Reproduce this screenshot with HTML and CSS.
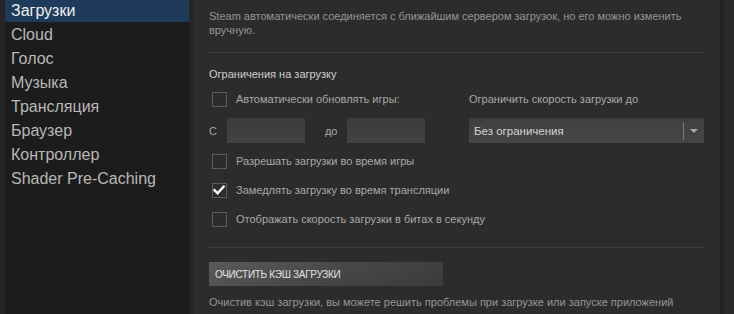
FILE: index.html
```html
<!DOCTYPE html>
<html lang="ru">
<head>
    <meta charset="UTF-8">
    <meta name="viewport" content="width=device-width, initial-scale=1.0">
    <title>Настройки — Загрузки</title>
    <link rel="stylesheet" href="styles.css">
</head>
<body class="settings-page">
    <ul class="side-menu">
        <li class="active">Загрузки</li>
        <li>Cloud</li>
        <li>Голос</li>
        <li>Музыка</li>
        <li>Трансляция</li>
        <li>Браузер</li>
        <li>Контроллер</li>
        <li>Shader Pre-Caching</li>
    </ul>

    <div class="panel">
        <p class="desc">Steam автоматически соединяется с ближайшим сервером загрузок, но его можно изменить вручную.</p>
        <div class="divider"></div>

        <h3 class="section-title">Ограничения на загрузку</h3>

        <div class="limits">
            <label class="check-row">
                <span class="box"></span>
                <span>Автоматически обновлять игры:</span>
            </label>
            <div class="limit-label">Ограничить скорость загрузки до</div>

            <div class="time-range">
                <span>С</span>
                <span class="field first"></span>
                <span class="to">до</span>
                <span class="field"></span>
            </div>
            <div class="dropdown">
                <span class="dropdown-value">Без ограничения</span>
                <span class="dropdown-arrow"></span>
            </div>
        </div>

        <label class="check-row spaced first-check">
            <span class="box"></span>
            <span>Разрешать загрузки во время игры</span>
        </label>
        <label class="check-row spaced">
            <span class="box checked">
                <svg viewBox="0 0 14 14" width="14" height="14"><path d="M2.5 7.2 L5.6 10.3 L11.6 3.6" fill="none" stroke="#fff" stroke-width="2.4" stroke-linecap="square"/></svg>
            </span>
            <span>Замедлять загрузку во время трансляции</span>
        </label>
        <label class="check-row spaced">
            <span class="box"></span>
            <span>Отображать скорость загрузки в битах в секунду</span>
        </label>

        <div class="divider lower"></div>

        <button class="clear-btn">Очистить кэш загрузки</button>
        <p class="note">Очистив кэш загрузки, вы можете решить проблемы при загрузке или запуске приложений</p>
    </div>

    <div class="scroll-strip"></div>
</body>
</html>
```

FILE: styles.css
```css
body.settings-page {
    margin: 0;
    padding: 0 0 0 5px;
    height: 314px;
    overflow: hidden;
    display: flex;
    background-color: #262626;
    font-family: 'Liberation Sans', Arial, sans-serif;
    color: #a3a3a3;
}

/* Боковое меню */
.side-menu {
    list-style: none;
    margin: 0;
    padding: 0;
    width: 184px;
    flex-shrink: 0;
    background-color: #1c1c1c;
}

.side-menu li {
    height: 22px;
    line-height: 22px;
    margin-bottom: 2px;
    padding-left: 6px;
    font-size: 16px;
    color: #b8b8b8;
}

.side-menu li.active {
    background-color: #1f3b5c;
    color: #f0f0f0;
}

/* Основная панель */
.panel {
    width: 495px;
    margin-left: 4px;
    padding: 0 16px;
    background-color: #2c2c2c;
    font-size: 11px;
    line-height: 14px;
}

.desc {
    margin: 0;
    padding-top: 9px;
    color: #959595;
}

.divider {
    height: 1px;
    margin-top: 15px;
    background-color: #3f3f3f;
}

.divider.lower {
    margin-top: 21px;
}

.section-title {
    margin: 14px 0 0;
    font-size: 11px;
    font-weight: normal;
    color: #cfcfcf;
}

.limits {
    display: grid;
    grid-template-columns: 260px 1fr;
    row-gap: 12px;
    margin-top: 11px;
}

.check-row {
    display: flex;
    align-items: center;
    height: 14px;
    color: #a8a8a8;
}

.check-row.spaced {
    margin-top: 15px;
}

.check-row.first-check {
    margin-top: 11px;
}

.box {
    width: 13px;
    height: 13px;
    border: 1px solid #5c5c5c;
    margin: 0 9px 0 3px;
    flex-shrink: 0;
    position: relative;
}

.box svg {
    position: absolute;
    top: -1px;
    left: -1px;
}

.limit-label {
    color: #a8a8a8;
    line-height: 14px;
}

.time-range {
    display: flex;
    align-items: center;
    height: 25px;
    color: #a8a8a8;
}

.field {
    width: 78px;
    height: 25px;
    background: linear-gradient(to bottom, #3b3b3b, #444);
}

.field.first {
    margin-left: 10px;
}

.to {
    margin: 0 9px 0 20px;
}

.dropdown {
    display: flex;
    align-items: center;
    height: 25px;
    background: linear-gradient(to bottom, #3f3f3f, #464646);
    color: #d4d4d4;
}

.dropdown-value {
    flex: 1;
    padding-left: 5px;
    font-size: 11.5px;
}

.dropdown-arrow {
    width: 20px;
    height: 18px;
    border-left: 1px solid #7a7a7a;
    position: relative;
}

.dropdown-arrow::after {
    content: "";
    position: absolute;
    top: 7px;
    left: 6px;
    border-left: 4px solid transparent;
    border-right: 4px solid transparent;
    border-top: 4px solid #a8a8a8;
}

.clear-btn {
    display: block;
    width: 234px;
    height: 24px;
    margin-top: 14px;
    padding: 0 6px;
    border: none;
    background: linear-gradient(160deg, #5a5a5a 0%, #464646 55%, #3b3b3b 100%);
    color: #e2e2e2;
    font-family: 'Liberation Sans', Arial, sans-serif;
    font-size: 10px;
    letter-spacing: -0.3px;
    text-transform: uppercase;
    text-align: left;
}

.note {
    margin: 9px 0 0;
    color: #959595;
}

.scroll-strip {
    flex: 1;
    border-left: 4px solid #222;
    background-color: #292929;
}
```
